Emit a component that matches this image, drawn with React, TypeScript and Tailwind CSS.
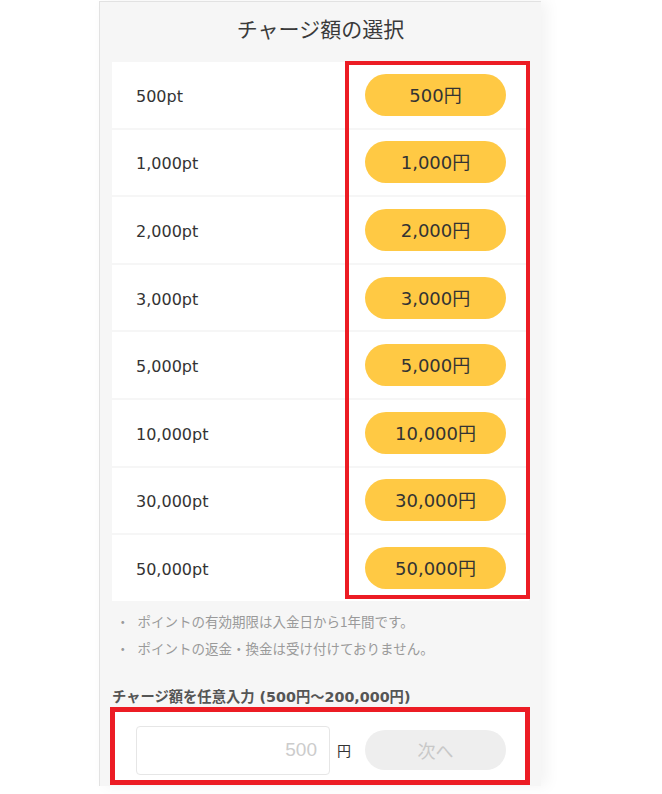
import React from "react";

const rows = [
  ["500pt", "500円"],
  ["1,000pt", "1,000円"],
  ["2,000pt", "2,000円"],
  ["3,000pt", "3,000円"],
  ["5,000pt", "5,000円"],
  ["10,000pt", "10,000円"],
  ["30,000pt", "30,000円"],
  ["50,000pt", "50,000円"],
];

const jp = { fontFamily: '"DejaVu Sans", "Noto Sans CJK JP", sans-serif' };

export default function App() {
  return (
    <div className="min-h-[794px] w-[662px] bg-white">
      <div
        className="relative ml-[99px] mt-px w-[442px] border-l border-t border-[#e2e2e2] bg-[#f6f6f6] pb-[1px] shadow-[6px_0_14px_rgba(0,0,0,0.05)]"
        style={jp}
      >
        <div
          className="flex h-[60px] items-center justify-center pb-[6px] text-[21px] text-[#3a3a3a]"
          style={{ fontFamily: '"Noto Sans CJK JP", sans-serif' }}
        >
          チャージ額の選択
        </div>

        <div className="relative mx-[12px] flex flex-col gap-[2px]">
          {rows.map(([pt, yen]) => (
            <div
              key={pt}
              className="flex h-[65.6px] items-center justify-between bg-white pl-[24px] pr-[23px]"
            >
              <span className="pt-[4px] text-[16px] text-[#333]">{pt}</span>
              <button className="flex h-[42px] w-[141px] items-center justify-center rounded-full bg-[#ffc944] pt-[1px] text-[18px] text-[#333]">
                {yen}
              </button>
            </div>
          ))}
          <div className="pointer-events-none absolute left-[233px] top-[-1px] h-[538px] w-[185px] border-[4px] border-[#ec1c24]" />
        </div>

        <ul className="mt-[6px] flex flex-col pl-[16px] text-[13.5px] leading-[28px] text-[#9a9a9a]" style={{ fontFamily: '"Noto Sans CJK JP", sans-serif' }}>
          <li className="flex gap-[8px]"><span>・</span><span>ポイントの有効期限は入金日から1年間です。</span></li>
          <li className="-mt-px flex gap-[8px]"><span>・</span><span>ポイントの返金・換金は受け付けておりません。</span></li>
        </ul>

        <div className="mt-[25px] pl-[12px] text-[14.3px] font-bold leading-[20px] text-[#555]">
          チャージ額を任意入力 (500円〜200,000円)
        </div>

        <div className="relative mx-[12px] mt-[4px] flex items-center bg-white pb-[8px] pl-[24px] pr-[21px] pt-[15px]">
          <input
            className="h-[49px] w-[194px] rounded-[4px] border border-[#e6e6e6] bg-white px-[12px] text-right text-[19px] text-[#333] placeholder:text-[#cccccc] outline-none"
            style={{ fontFamily: '"Liberation Sans", Arial, sans-serif' }}
            placeholder="500"
          />
          <span className="ml-[7px] text-[14px] text-[#333]" style={{ fontFamily: '"Noto Sans CJK JP", sans-serif' }}>円</span>
          <button
            className="ml-[14px] flex h-[40px] w-[141px] items-center justify-center rounded-full bg-[#eeeeee] text-[18px] text-[#c8c8c8]"
            style={{ fontFamily: '"Noto Sans CJK JP", sans-serif' }}
          >
            次へ
          </button>
          <div className="pointer-events-none absolute bottom-[-2px] left-[-2px] right-[-1px] top-[-4px] border-[5px] border-[#ec1c24]" />
        </div>
        <div className="h-[2px]" />
      </div>
    </div>
  );
}
